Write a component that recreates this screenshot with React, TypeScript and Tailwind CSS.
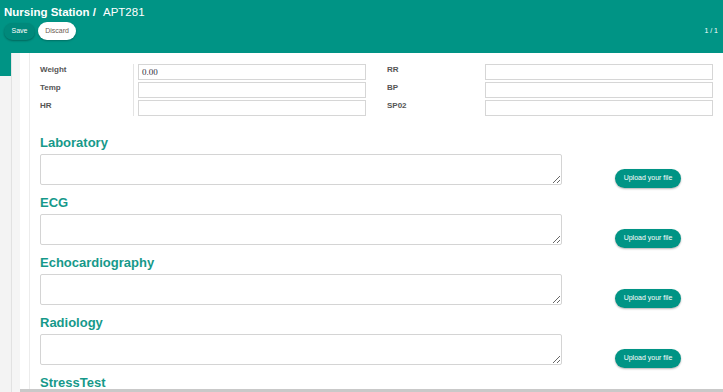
import React from 'react';

const VITALS_LEFT = [
  { label: 'Weight', value: '0.00' },
  { label: 'Temp', value: '' },
  { label: 'HR', value: '' },
];

const VITALS_RIGHT = [
  { label: 'RR', value: '' },
  { label: 'BP', value: '' },
  { label: 'SP02', value: '' },
];

const SECTIONS = ['Laboratory', 'ECG', 'Echocardiography', 'Radiology'];

function VitalsColumn({
  rows,
  divider,
  className,
}: {
  rows: { label: string; value: string }[];
  divider?: boolean;
  className?: string;
}) {
  return (
    <div className={`flex w-[326px] ${className ?? ''}`}>
      <div
        className={`flex shrink-0 flex-col gap-[2px] ${
          divider ? 'mr-[4px] w-[94px] border-r border-[#e4e4e4]' : 'w-[98px]'
        }`}
      >
        {rows.map((r) => (
          <span key={r.label} className="h-[16px] text-[8px] font-bold leading-[12px] text-[#555]">
            {r.label}
          </span>
        ))}
      </div>
      <div className="flex flex-1 flex-col gap-[2px]">
        {rows.map((r) => (
          <div
            key={r.label}
            className="h-[16px] border border-[#d6d6d6] bg-white px-[3px] font-['Liberation_Serif',serif] text-[9px] leading-[14px] text-[#334]"
          >
            {r.value}
          </div>
        ))}
      </div>
    </div>
  );
}

export default function App() {
  return (
    <div className="relative h-[392px] w-[723px] overflow-hidden bg-[#f3f3f3] font-['Liberation_Sans',Arial,sans-serif]">
      {/* Header */}
      <div className="h-[76px] bg-[#009485] px-[4px] pt-[4px] text-white">
        <div className="flex text-[11.5px] leading-[16px]">
          <span className="font-bold">Nursing Station /</span>
          <span className="ml-[7px]">APT281</span>
        </div>
        <div className="mt-[2px] flex items-center">
          <button className="h-[17px] w-[31px] rounded-full bg-[#00897b] text-[7px] text-white shadow-[0_1px_2px_rgba(0,0,0,0.3)]">
            Save
          </button>
          <button className="ml-[3px] h-[18px] w-[38px] rounded-full bg-white text-[7px] text-[#6b5a50] shadow-[0_1px_2px_rgba(0,0,0,0.25)]">
            Discard
          </button>
          <span className="ml-auto pr-[1px] text-[7px]">1 / 1</span>
        </div>
      </div>

      {/* Card */}
      <div className="absolute left-[11px] top-[53px] flex h-[339px] w-[712px] border-l border-[#e2e2e2] bg-white">
        <div className="w-[8px] shrink-0 bg-[#f5f5f5]" />
        <div className="w-[10px] shrink-0 border-r border-[#ececec]" />
        <div className="flex-1 pl-[10px] pr-[9px] pt-[11px]">
          {/* Vitals */}
          <div className="flex">
            <VitalsColumn rows={VITALS_LEFT} divider />
            <VitalsColumn rows={VITALS_RIGHT} className="ml-[21px]" />
          </div>

          {/* Sections */}
          <div className="mt-[18px] flex flex-col">
            {SECTIONS.map((s) => (
              <div key={s} className="h-[60px]">
                <div className="h-[18px] text-[13px] font-bold leading-[17px] text-[#16998a]">{s}</div>
                <div className="mt-[2px] flex items-start">
                  <textarea
                    className="h-[31px] w-[522px] resize-y rounded-[2px] border border-[#d4d4d4] bg-white"
                    readOnly
                  />
                  <button className="ml-[53px] mt-[15px] h-[19px] w-[66px] rounded-full bg-[#009485] text-[7px] text-white shadow-[0_1px_2px_rgba(0,0,0,0.3)]">
                    Upload your file
                  </button>
                </div>
              </div>
            ))}
            <div className="h-[18px] text-[13px] font-bold leading-[17px] text-[#16998a]">StressTest</div>
          </div>
        </div>
      </div>

      {/* bottom scroll bar */}
      <div className="absolute bottom-0 left-[20px] right-0 h-[3px] bg-[#c9c9c9]" />
    </div>
  );
}
